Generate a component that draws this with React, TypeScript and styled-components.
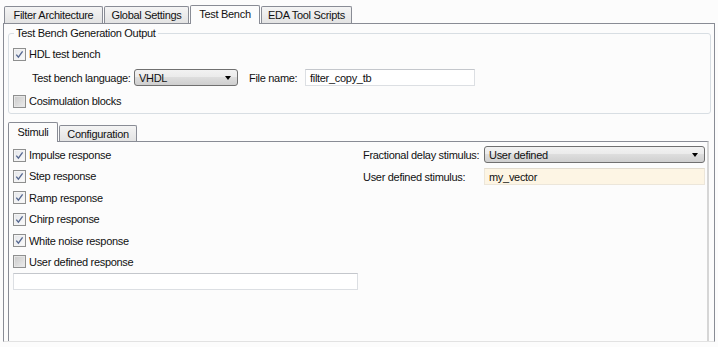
import React from "react";
import styled, { createGlobalStyle } from "styled-components";

const GlobalStyle = createGlobalStyle`
  html, body { margin: 0; padding: 0; background: #fcfcfc; }
  #root { width: 718px; height: 347px; }
`;

const Window = styled.div`
  box-sizing: border-box;
  width: 718px;
  height: 347px;
  padding: 5px 3px 5px 3px;
  display: flex;
  flex-direction: column;
  background: #fcfcfc;
  color: #111;
  font-family: "Liberation Sans", Arial, sans-serif;
  font-size: 11px;
  letter-spacing: -0.3px;
`;

const TabStrip = styled.div<{ $height: number; $inset?: number; $top?: number }>`
  display: flex;
  align-items: flex-end;
  height: ${(p) => p.$height}px;
  padding-left: ${(p) => p.$inset ?? 0}px;
  margin-top: ${(p) => p.$top ?? 0}px;
  position: relative;
  z-index: 1;
  flex: none;
`;

const Tab = styled.div<{ $w: number; $h: number; $active?: boolean }>`
  box-sizing: border-box;
  width: ${(p) => p.$w}px;
  height: ${(p) => p.$h}px;
  margin-right: 1px;
  margin-bottom: ${(p) => (p.$active ? -1 : 0)}px;
  border: 1px solid #898c95;
  border-bottom: none;
  border-radius: 2px 2px 0 0;
  background: ${(p) => (p.$active ? "#fcfcfc" : "linear-gradient(#f4f4f4, #e3e3e3)")};
  display: flex;
  align-items: center;
  justify-content: center;
  padding-bottom: ${(p) => (p.$active ? 2 : 0)}px;
  white-space: nowrap;
`;

const Pane = styled.div`
  flex: 1;
  min-height: 0;
  box-sizing: border-box;
  border: 1px solid #898c95;
  border-bottom-color: #e2e2e2;
  padding: 3px 3px 0 4px;
  display: flex;
  flex-direction: column;
`;

const Group = styled.fieldset`
  margin: 0;
  padding: 0 0 4px 0;
  border: 1px solid #d8dee3;
  border-radius: 3px;
  min-width: 0;
  flex: none;
`;

const Legend = styled.legend`
  margin-left: 5px;
  padding: 0 2px;
  height: 13px;
  line-height: 13px;
`;

const GroupBody = styled.div`
  display: flex;
  flex-direction: column;
  gap: 7px;
  padding: 6px 0 0 4px;
`;

const CheckRow = styled.div`
  display: flex;
  align-items: center;
  gap: 3px;
  height: 16px;
  white-space: nowrap;
`;

const Box = styled.span<{ $checked: boolean }>`
  box-sizing: border-box;
  width: 13px;
  height: 13px;
  flex: none;
  border: 1px solid #8e8f8f;
  display: flex;
  align-items: center;
  justify-content: center;
  background: ${(p) =>
    p.$checked
      ? "linear-gradient(135deg, #e4e6ea, #fbfbfb)"
      : "linear-gradient(135deg, #c9c9c9, #ececec)"};
  box-shadow: inset 0 0 0 1px ${(p) => (p.$checked ? "#f4f4f4" : "#e6e6e6")};
`;

const FieldRow = styled.div<{ $indent?: number }>`
  display: flex;
  align-items: center;
  height: 17px;
  padding-left: ${(p) => p.$indent ?? 0}px;
  white-space: nowrap;
`;

const Label = styled.span<{ $w?: number }>`
  width: ${(p) => (p.$w ? `${p.$w}px` : "auto")};
  flex: none;
  white-space: nowrap;
`;

const Select = styled.div<{ $w?: number; $gapAfter?: number }>`
  box-sizing: border-box;
  width: ${(p) => (p.$w ? `${p.$w}px` : "100%")};
  height: 17px;
  margin-right: ${(p) => p.$gapAfter ?? 0}px;
  border: 1px solid #707070;
  border-radius: 3px;
  background: linear-gradient(#f2f2f2 0%, #ebebeb 45%, #dddddd 50%, #cfcfcf 100%);
  display: flex;
  align-items: center;
  justify-content: space-between;
  padding: 0 6px 0 4px;
  flex: none;
`;

const Arrow = styled.span`
  width: 0;
  height: 0;
  border-left: 3.5px solid transparent;
  border-right: 3.5px solid transparent;
  border-top: 4px solid #000;
`;

const Field = styled.div<{ $w?: number; $tint?: boolean; $top?: number }>`
  box-sizing: border-box;
  width: ${(p) => (p.$w ? `${p.$w}px` : "100%")};
  height: 17px;
  margin-top: ${(p) => p.$top ?? 0}px;
  border: 1px solid ${(p) => (p.$tint ? "#ece6da" : "#dcdfe3")};
  border-top-color: ${(p) => (p.$tint ? "#e2dccf" : "#c4c7cc")};
  background: ${(p) => (p.$tint ? "#fdf5e4" : "#ffffff")};
  display: flex;
  align-items: center;
  padding-left: 4px;
  flex: none;
`;

const SubPane = styled.div`
  flex: 1;
  min-height: 0;
  margin-right: 2px;
  border-left: 1px solid #898c95;
  border-top: 1px solid #898c95;
  border-right: 2px solid #d6d6d6;
  display: grid;
  grid-template-columns: 345px 1fr;
  column-gap: 5px;
  padding: 0 2px 0 4px;
`;

const LeftColumn = styled.div`
  display: flex;
  flex-direction: column;
  gap: 5.4px;
  padding-top: 5px;
`;

const RightColumn = styled.div`
  display: grid;
  grid-template-columns: 121px 1fr;
  grid-auto-rows: 17px;
  row-gap: 5px;
  align-items: center;
  align-content: start;
  padding-top: 4px;
`;

const Check = ({ checked }: { checked: boolean }) => (
  <Box $checked={checked}>
    {checked && (
      <svg width="9" height="9" viewBox="0 0 9 9">
        <path d="M1.3 4.6 L3.4 7.2 L7.6 1.4" stroke="#566890" strokeWidth="1.35" fill="none" />
      </svg>
    )}
  </Box>
);

const stimuli: { label: string; checked: boolean }[] = [
  { label: "Impulse response", checked: true },
  { label: "Step response", checked: true },
  { label: "Ramp response", checked: true },
  { label: "Chirp response", checked: true },
  { label: "White noise response", checked: true },
  { label: "User defined response", checked: false },
];

export default function App() {
  return (
    <>
      <GlobalStyle />
      <Window>
        <TabStrip $height={18} $inset={1}>
          <Tab $w={99} $h={17}>Filter Architecture</Tab>
          <Tab $w={85} $h={17}>Global Settings</Tab>
          <Tab $w={70} $h={19} $active>Test Bench</Tab>
          <Tab $w={91} $h={17}>EDA Tool Scripts</Tab>
        </TabStrip>
        <Pane>
          <Group>
            <Legend>Test Bench Generation Output</Legend>
            <GroupBody>
              <CheckRow>
                <Check checked />
                <span>HDL test bench</span>
              </CheckRow>
              <FieldRow $indent={19}>
                <Label $w={102}>Test bench language:</Label>
                <Select $w={104} $gapAfter={11}>
                  <span>VHDL</span>
                  <Arrow />
                </Select>
                <Label $w={56}>File name:</Label>
                <Field $w={170}>filter_copy_tb</Field>
              </FieldRow>
              <CheckRow>
                <Check checked={false} />
                <span>Cosimulation blocks</span>
              </CheckRow>
            </GroupBody>
          </Group>
          <TabStrip $height={19} $top={8}>
            <Tab $w={50} $h={20} $active>Stimuli</Tab>
            <Tab $w={78} $h={16}>Configuration</Tab>
          </TabStrip>
          <SubPane>
            <LeftColumn>
              {stimuli.map((s) => (
                <CheckRow key={s.label}>
                  <Check checked={s.checked} />
                  <span>{s.label}</span>
                </CheckRow>
              ))}
              <Field $top={-2} />
            </LeftColumn>
            <RightColumn>
              <Label>Fractional delay stimulus:</Label>
              <Select>
                <span>User defined</span>
                <Arrow />
              </Select>
              <Label>User defined stimulus:</Label>
              <Field $tint>my_vector</Field>
            </RightColumn>
          </SubPane>
        </Pane>
      </Window>
    </>
  );
}
